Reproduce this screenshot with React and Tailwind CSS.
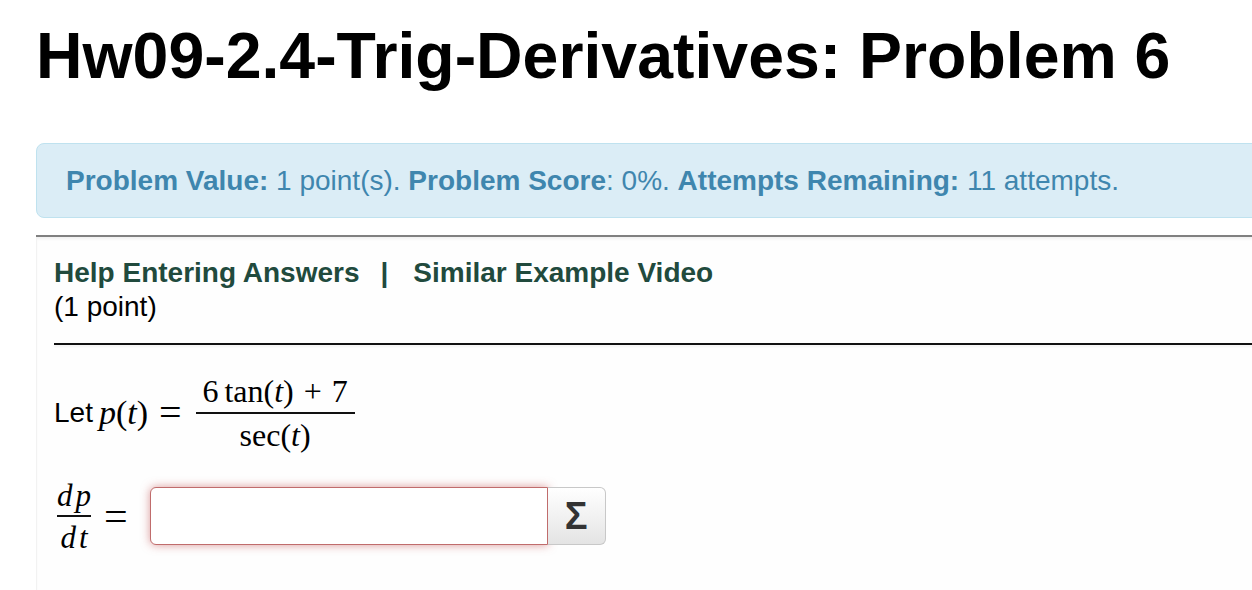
export default function App() {
  const sans = { fontFamily: '"Liberation Sans", Arial, Helvetica, sans-serif' };
  const serif = { fontFamily: '"Liberation Serif", "Times New Roman", serif' };
  return (
    <div className="w-full min-h-screen bg-white overflow-hidden" style={sans}>
      <div className="ml-[36px] w-[1240px]">
        <h1 className="mt-[24px] text-[64.4px] leading-none font-bold text-black">
          Hw09-2.4-Trig-Derivatives: Problem 6
        </h1>

        <div className="mt-[55px] h-[75px] flex items-center pl-[29px] bg-[#dbedf6] border border-[#bfe2ef] rounded-[8px] text-[28px] leading-none text-[#3f86ae]">
          <span>
            <b>Problem Value:</b> 1 point(s). <b>Problem Score</b>: 0%. <b>Attempts Remaining:</b> 11 attempts.
          </span>
        </div>

        <div className="mt-[17px] border-t-2 border-[#808080] shadow-[inset_0_2px_3px_rgba(0,0,0,0.06)] bg-[#fefefe]">
          <div className="border-l border-[#f2f2f2] pl-[17px] pb-[40px]">
            <div className="pt-[19px] text-[28px] leading-[34px]">
              <div className="font-bold text-[#214a3d]">
                <span>Help Entering Answers</span>
                <span className="ml-[21px] mr-[25px]">|</span>
                <span>Similar Example Video</span>
              </div>
              <div className="text-black">(1 point)</div>
            </div>

            <div className="mt-[19px] border-t-2 border-[#111] shadow-[0_2px_2px_rgba(0,0,0,0.05)]" />

            <div className="mt-[27px] flex items-center text-black">
              <span className="text-[28px] leading-none">Let</span>
              <span className="ml-[6px] text-[34px] leading-none" style={serif}>
                <i>p</i>(<i>t</i>)
              </span>
              <span className="ml-[11px] text-[40px] leading-none" style={serif}>=</span>
              <span className="ml-[14px] flex flex-col items-stretch w-[159px]" style={serif}>
                <span className="h-[40px] flex items-end justify-center pb-[5px] text-[32px] leading-none">
                  <span>6</span>
                  <span className="ml-[6px]">tan(<i>t</i>)</span>
                  <span className="mx-[10px]">+</span>
                  <span>7</span>
                </span>
                <span className="h-[2px] bg-[#111]" />
                <span className="h-[40px] flex justify-center pt-[5px] text-[32px] leading-none">
                  <span>sec(<i>t</i>)</span>
                </span>
              </span>
            </div>

            <div className="mt-[21px] flex items-center text-black">
              <span className="flex flex-col items-stretch px-[3px]" style={serif}>
                <span className="h-[40px] flex items-end justify-center pb-[4px] text-[31px] leading-none italic">
                  <span>d</span>
                  <span className="ml-[3px]">p</span>
                </span>
                <span className="h-[2px] bg-[#111]" />
                <span className="h-[40px] flex justify-center pt-[5px] text-[31px] leading-none italic">
                  <span>d</span>
                  <span className="ml-[3px]">t</span>
                </span>
              </span>
              <span className="ml-[10px] text-[42px] leading-none" style={serif}>=</span>
              <div className="ml-[22px] flex">
                <div className="w-[398px] h-[58px] bg-white border border-[#c06c6c] rounded-l-[6px] shadow-[0_0_10px_rgba(190,70,70,0.55)]" />
                <div className="w-[58px] h-[58px] flex items-center justify-center border border-l-0 border-[#c8c8c8] rounded-r-[6px] bg-gradient-to-b from-white to-[#e4e4e4] text-[38px] font-bold text-[#333] leading-none">
                  Σ
                </div>
              </div>
            </div>
          </div>
        </div>
      </div>
    </div>
  );
}
